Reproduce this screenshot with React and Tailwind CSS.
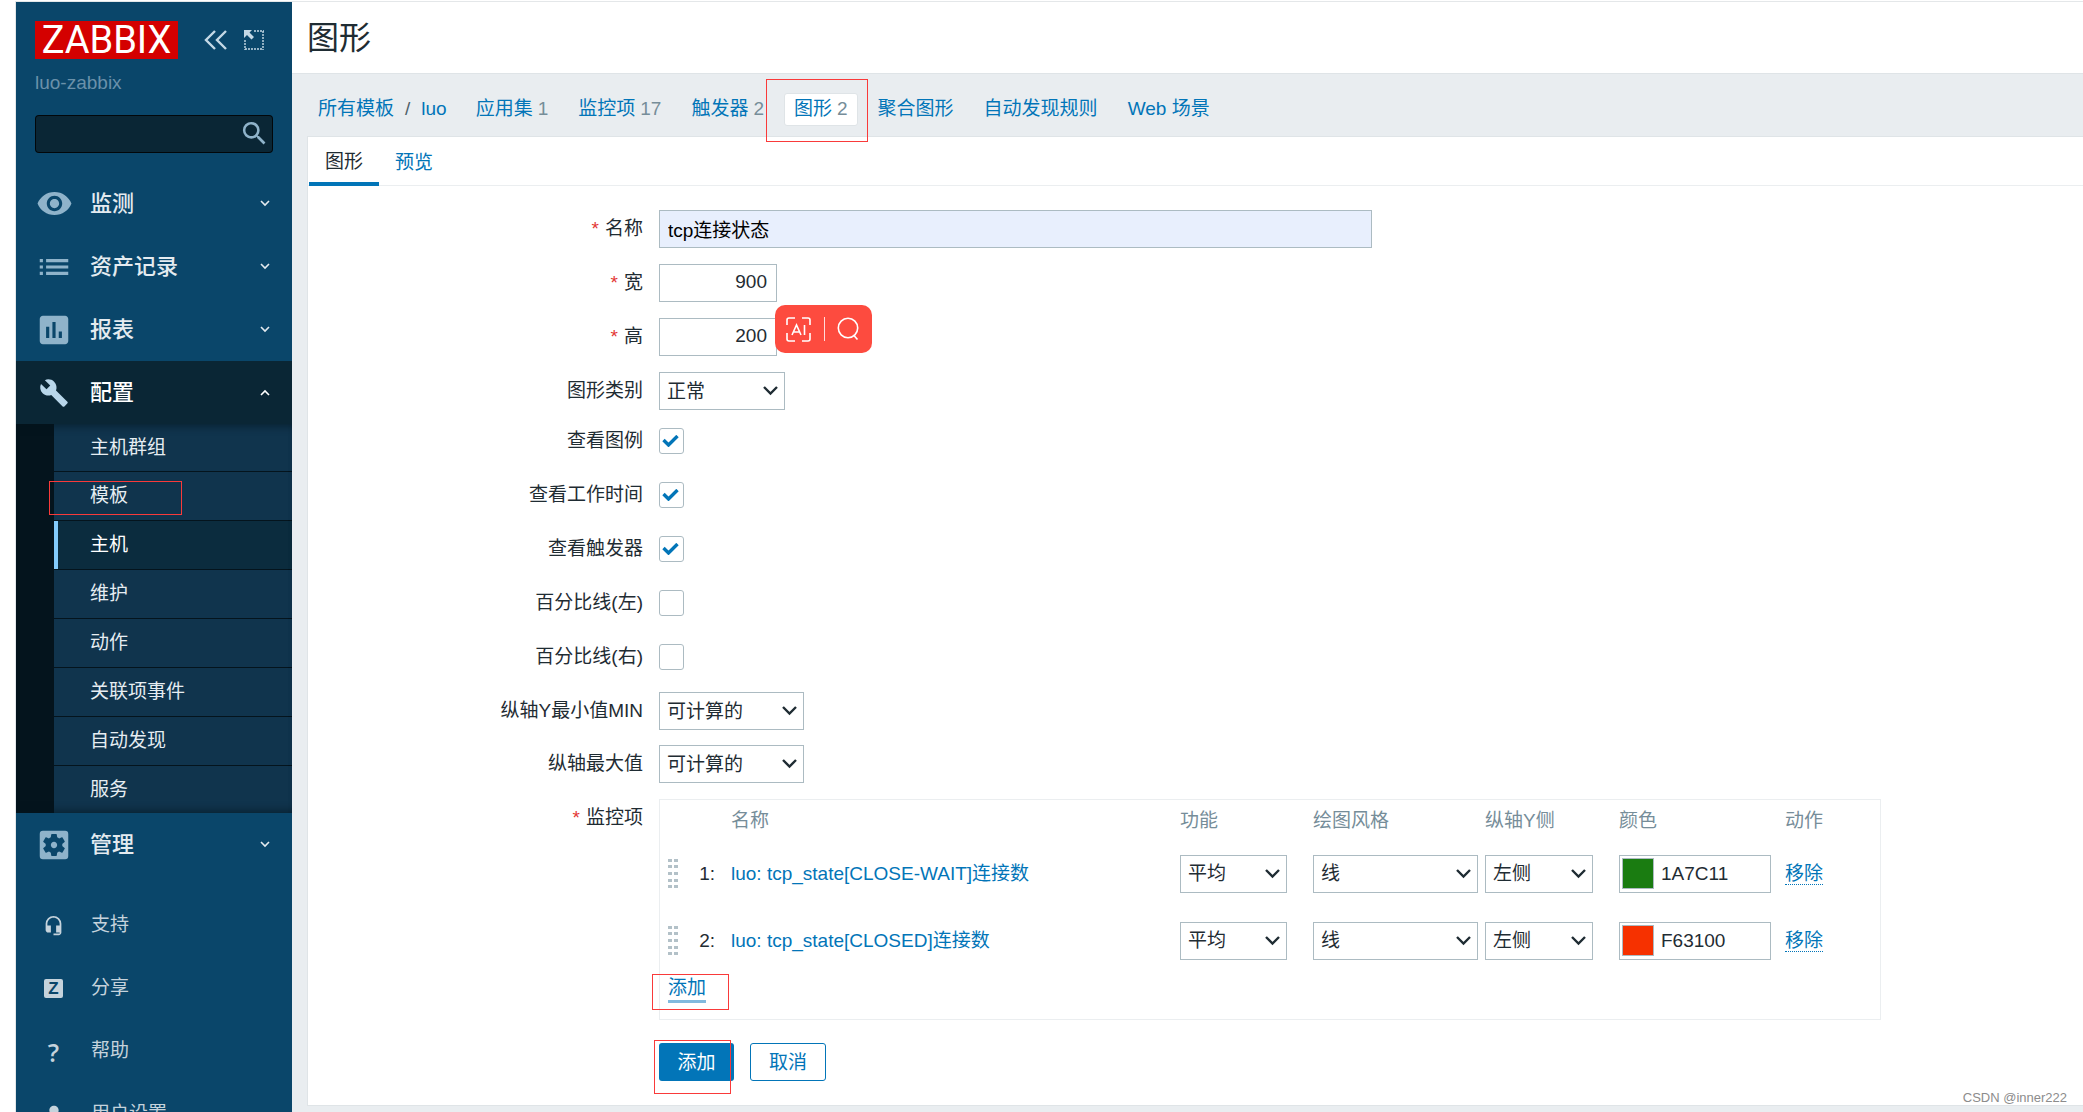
import React, { useState } from 'react'
import {
  MdVisibility,
  MdList,
  MdAssessment,
  MdBuild,
  MdSettingsApplications,
  MdSearch,
  MdHeadsetMic,
  MdPerson,
} from 'react-icons/md'

const subMenu = [
  '主机群组',
  '模板',
  '主机',
  '维护',
  '动作',
  '关联项事件',
  '自动发现',
  '服务',
]

const navLinks = [
  { name: '应用集', count: 1 },
  { name: '监控项', count: 17 },
  { name: '触发器', count: 2 },
  { name: '图形', count: 2, selected: true },
  { name: '聚合图形' },
  { name: '自动发现规则' },
  { name: 'Web 场景' },
]

const graphItems = [
  { id: 1, name: 'luo: tcp_state[CLOSE-WAIT]连接数', color: '1A7C11' },
  { id: 2, name: 'luo: tcp_state[CLOSED]连接数', color: 'F63100' },
]

// red frame drawn over an element
function Mark({ className }) {
  return (
    <span
      className={`pointer-events-none absolute border border-[#f93a3a] ${className}`}
    ></span>
  )
}

function Chevron({ up }) {
  return (
    <svg width="10" height="7" viewBox="0 0 10 7" fill="none" stroke="currentColor" strokeWidth="1.6">
      <path d={up ? 'M1 6l4-4 4 4' : 'M1 1l4 4 4-4'} />
    </svg>
  )
}

function MenuItem({ icon, name, open }) {
  return (
    <a
      href="#"
      className={`flex h-[63px] items-center pr-[22px] text-[22px] font-medium ${
        open ? 'bg-[#0a2635] text-white' : 'text-[#e4ebf0]'
      }`}
    >
      <span
        className={`flex w-[74px] items-center justify-center pl-[2px] ${
          open ? 'text-[#b8d6ea]' : 'text-[#8fb3ca]'
        }`}
      >
        {icon}
      </span>
      <span className="flex-1">{name}</span>
      <Chevron up={open} />
    </a>
  )
}

function FooterItem({ icon, name }) {
  return (
    <a href="#" className="flex h-[63px] items-center text-[#c5d3dc]">
      <span className="flex w-[75px] items-center justify-center">{icon}</span>
      <span>{name}</span>
    </a>
  )
}

function Sidebar() {
  return (
    <aside className="flex w-[276px] shrink-0 flex-col overflow-hidden bg-[#0a466a]">
      <div className="flex items-center pt-[19px] pl-[19px]">
        <a
          href="#"
          className="flex h-[38px] w-[143px] items-center justify-center bg-[#d40000] font-[Roboto] text-[38px] text-white"
        >
          ZABBIX
        </a>
        <button className="ml-[26px] text-[#c5d9e6]" aria-label="collapse">
          <svg width="24" height="20" viewBox="0 0 24 20" fill="none" stroke="currentColor" strokeWidth="2.4">
            <path d="M11 1L2 10l9 9M22 1l-9 9 9 9" />
          </svg>
        </button>
        <button className="ml-4 text-[#c5d9e6]" aria-label="hide">
          <svg width="20" height="20" viewBox="0 0 20 20" fill="none" stroke="currentColor" strokeWidth="1.4">
            <path d="M10 1h10M19 1v19M1 19h18M1 10v10" strokeDasharray="2 1" />
            <path d="M0 0h8L5.500 2.500l4.500 4.500-2.500 2.500L3 5 0 8z" fill="currentColor" stroke="none" />
          </svg>
        </button>
      </div>
      <div className="mt-3 pl-[19px] leading-6 text-[#6a91aa]">luo-zabbix</div>
      <div className="relative mx-[19px] mt-5 mb-[19px]">
        <input
          type="text"
          aria-label="search"
          className="block h-[38px] w-full rounded-[4px] border border-black/80 bg-[#0a2635] px-2 text-white"
        />
        <MdSearch size={31} className="absolute top-[3px] right-[3px] text-[#8fb3ca]" />
      </div>
      <nav>
        <MenuItem icon={<MdVisibility size={37} />} name="监测" />
        <MenuItem icon={<MdList size={38} />} name="资产记录" />
        <MenuItem icon={<MdAssessment size={38} />} name="报表" />
        <MenuItem icon={<MdBuild size={30} />} name="配置" open />
        <div className="relative bg-[#04141d] pl-[38px]">
          <ul className="flex flex-col gap-px">
            {subMenu.map((item) => (
              <li
                key={item}
                className={`relative h-12 first:h-[47px] last:h-[47px] ${
                  item === '主机'
                    ? 'border-l-4 border-[#83cbfb] bg-[#0b2c3e] pl-8 text-white'
                    : 'bg-[#10344d] pl-9 text-[#e6edf2]'
                }`}
              >
                <a href="#" className="block leading-[47px]">
                  {item}
                </a>
                {item === '模板' && (
                  <Mark className="top-[9px] -left-[5px] h-[34px] w-[133px]" />
                )}
              </li>
            ))}
          </ul>
          <div className="pointer-events-none absolute inset-0 shadow-[inset_0_8px_8px_-6px_rgba(4,20,29,0.6),inset_0_-8px_8px_-6px_rgba(4,20,29,0.6)]"></div>
        </div>
        <MenuItem icon={<MdSettingsApplications size={38} />} name="管理" />
      </nav>
      <nav className="mt-[18px]">
        <FooterItem icon={<MdHeadsetMic size={21} />} name="支持" />
        <FooterItem
          icon={
            <span className="flex size-[19px] items-center justify-center rounded-[2px] bg-[#c5d3dc] text-[17px] leading-none font-bold text-[#0a466a]">
              Z
            </span>
          }
          name="分享"
        />
        <FooterItem
          icon={<span className="font-['Open_Sans'] text-[25px] leading-6 font-semibold">?</span>}
          name="帮助"
        />
        <FooterItem icon={<MdPerson size={28} />} name="用户设置" />
      </nav>
    </aside>
  )
}

function Field({ id, label, required, children }) {
  return (
    <div className="flex items-center">
      <label htmlFor={id} className="mr-4 w-[335px] text-right leading-6">
        {required && <span className="mr-[6px] text-[#e33734]">*</span>}
        {label}
      </label>
      {children}
    </div>
  )
}

function Select({ id, value, label, className }) {
  return (
    <div className={`relative ${className}`}>
      <select
        id={id}
        aria-label={label}
        className="block h-[38px] w-full appearance-none border border-[#acbbc2] bg-white pt-[2px] pl-[7px] text-[#1f2c33]"
      >
        <option>{value}</option>
      </select>
      <svg
        className="pointer-events-none absolute top-[14px] right-[7px]"
        width="15"
        height="10"
        viewBox="0 0 15 10"
        fill="none"
        stroke="#1f2c33"
        strokeWidth="2.4"
      >
        <path d="M1 1l6.500 6.500L14 1" />
      </svg>
    </div>
  )
}

function Checkbox({ id, checked }) {
  const [on, setOn] = useState(!!checked)
  return (
    <div className="relative h-[26px] w-[25px]">
      <input
        id={id}
        type="checkbox"
        checked={on}
        onChange={() => setOn(!on)}
        className="block size-full appearance-none rounded-[3px] border border-[#acbbc2] bg-white"
      />
      {on && (
        <svg
          className="pointer-events-none absolute top-[7px] left-[3px]"
          width="17"
          height="12"
          viewBox="0 0 17 12"
          fill="none"
          stroke="#0275b8"
          strokeWidth="3.4"
        >
          <path d="M1.500 5l5 5L15.500 1" />
        </svg>
      )}
    </div>
  )
}

function AiBadge() {
  return (
    <div className="absolute -top-[13px] left-[116px] flex h-12 w-[97px] items-center justify-between rounded-[10px] bg-[#fd4b3f] pr-[13px] pl-[11px]">
      <svg width="25" height="25" viewBox="0 0 25 25" fill="none" stroke="#fff" strokeWidth="1.6">
        <path d="M1 8V3q0-2 2-2h6M16 1h6q2 0 2 2v5M24 16v6q0 2-2 2h-6M9 24H3q-2 0-2-2v-6" />
        <path d="M6 18l4.500-10L15 18M7.500 15h6M18.500 8v10" />
      </svg>
      <span className="h-6 w-px bg-white/80"></span>
      <svg width="22" height="24" viewBox="0 0 22 24" fill="none" stroke="#fff" strokeWidth="1.6">
        <circle cx="11" cy="11" r="9.700" />
        <path d="M16.500 18l4 4.500" />
      </svg>
    </div>
  )
}

function DragHandle() {
  return (
    <svg width="10" height="30" viewBox="0 0 10 30" fill="#b3c1c8">
      {[0, 6, 13, 20, 26].map((y) => (
        <g key={y}>
          <rect x="0" y={y} width="4" height="3" />
          <rect x="6" y={y} width="4" height="3" />
        </g>
      ))}
    </svg>
  )
}

function ItemsTable() {
  return (
    <div className="w-[1222px] border border-[#ebeef0] pb-4 pl-2">
      <table className="w-full table-fixed text-left">
        <colgroup>
          <col className="w-4" />
          <col className="w-[47px]" />
          <col />
          <col className="w-[133px]" />
          <col className="w-[172px]" />
          <col className="w-[134px]" />
          <col className="w-[166px]" />
          <col className="w-[95px]" />
        </colgroup>
        <thead>
          <tr className="h-10 text-[#768d99] *:pt-[2px] *:font-normal">
            <td></td>
            <td></td>
            <th>名称</th>
            <th>功能</th>
            <th>绘图风格</th>
            <th>纵轴Y侧</th>
            <th>颜色</th>
            <th>动作</th>
          </tr>
        </thead>
        <tbody>
          {graphItems.map((item) => (
            <tr key={item.id} className="h-[67px]">
              <td>
                <DragHandle />
              </td>
              <td className="pt-[2px] pr-4 text-right">{item.id}:</td>
              <td className="pt-[2px]">
                <a href="#" className="text-[#0275b8]">
                  {item.name}
                </a>
              </td>
              <td>
                <Select label="功能" value="平均" className="w-[107px]" />
              </td>
              <td>
                <Select label="绘图风格" value="线" className="w-[165px]" />
              </td>
              <td>
                <Select label="纵轴Y侧" value="左侧" className="w-[108px]" />
              </td>
              <td>
                <div className="flex h-[38px] w-[152px] items-center border border-[#acbbc2] pl-[2px]">
                  <span
                    className="h-[31px] w-8 shrink-0 border border-[#acbbc2]"
                    style={{ backgroundColor: '#' + item.color }}
                  ></span>
                  <input
                    type="text"
                    aria-label="颜色"
                    defaultValue={item.color}
                    className="h-full w-full min-w-0 pl-[7px]"
                  />
                </div>
              </td>
              <td className="pt-[2px]">
                <a href="#" className="border-b border-dotted border-[#0275b8] text-[#0275b8]">
                  移除
                </a>
              </td>
            </tr>
          ))}
        </tbody>
      </table>
      <div className="relative w-fit">
        <a href="#" className="block border-b-3 border-[#81bade] pt-[2px] leading-6 text-[#0275b8]">
          添加
        </a>
        <Mark className="top-0 -left-4 h-9 w-[77px]" />
      </div>
    </div>
  )
}

function GraphForm() {
  return (
    <form className="pt-6 pb-6">
      <div className="flex flex-col gap-4">
        <Field id="name" label="名称" required>
          <input
            id="name"
            type="text"
            defaultValue="tcp连接状态"
            className="h-[38px] w-[713px] border border-[#acbbc2] bg-[#e8effd] px-2 pb-[2px] text-black"
          />
        </Field>
        <Field id="width" label="宽" required>
          <input
            id="width"
            type="text"
            defaultValue="900"
            className="h-[38px] w-[118px] border border-[#acbbc2] px-[9px] pb-[2px] text-right"
          />
        </Field>
        <Field id="height" label="高" required>
          <div className="relative">
            <input
              id="height"
              type="text"
              defaultValue="200"
              className="block h-[38px] w-[118px] border border-[#acbbc2] px-[9px] pb-[2px] text-right"
            />
            <AiBadge />
          </div>
        </Field>
        <Field id="graphtype" label="图形类别">
          <Select id="graphtype" value="正常" className="w-[126px]" />
        </Field>
      </div>
      <div className="mt-[18px] flex flex-col gap-7">
        <Field id="legend" label="查看图例">
          <Checkbox id="legend" checked />
        </Field>
        <Field id="worktime" label="查看工作时间">
          <Checkbox id="worktime" checked />
        </Field>
        <Field id="triggers" label="查看触发器">
          <Checkbox id="triggers" checked />
        </Field>
        <Field id="percentleft" label="百分比线(左)">
          <Checkbox id="percentleft" />
        </Field>
        <Field id="percentright" label="百分比线(右)">
          <Checkbox id="percentright" />
        </Field>
      </div>
      <div className="mt-[22px] flex flex-col gap-[15px]">
        <Field id="ymin" label="纵轴Y最小值MIN">
          <Select id="ymin" value="可计算的" className="w-[145px]" />
        </Field>
        <Field id="ymax" label="纵轴最大值">
          <Select id="ymax" value="可计算的" className="w-[145px]" />
        </Field>
      </div>
      <div className="mt-4 flex items-start">
        <div className="mt-[7px] mr-4 w-[335px] text-right leading-6">
          <span className="mr-[6px] text-[#e33734]">*</span>
          监控项
        </div>
        <ItemsTable />
      </div>
      <div className="mt-[23px] flex gap-4 pl-[351px]">
        <div className="relative">
          <button
            type="button"
            className="block h-[38px] w-[75px] rounded-[3px] bg-[#0275b8] pt-[3px] text-white"
          >
            添加
          </button>
          <Mark className="-top-[3px] -left-[5px] h-[54px] w-[77px]" />
        </div>
        <button
          type="button"
          className="h-[38px] w-[76px] rounded-[3px] border border-[#0275b8] pt-[3px] text-[#0275b8]"
        >
          取消
        </button>
      </div>
    </form>
  )
}

export default function App() {
  return (
    <div className="relative h-screen overflow-hidden bg-white pt-px pl-[15px] font-['Liberation_Sans','Noto_Sans_CJK_SC',sans-serif] text-[19px] text-[#1f2c33]">
      <div className="flex h-full border-t border-l border-[#e4e7e9]">
        <Sidebar />
        <main className="min-w-0 flex-1 bg-[#e9edf0]">
          <header className="flex h-[72px] items-center border-b border-[#dfe4e7] bg-white pl-[15px]">
            <h1 className="text-[32px]">图形</h1>
          </header>
          <nav className="flex h-[62px] items-center gap-[10px] pt-2 pl-[26px] text-[#0275b8]">
            <div className="mr-[9px] flex items-center">
              <a href="#">所有模板</a>
              <span className="mx-[11px] text-[#4f5f68]">/</span>
              <a href="#">luo</a>
            </div>
            {navLinks.map((link) => (
              <div key={link.name} className="relative">
                <a
                  href="#"
                  className={`flex h-[33px] items-center gap-[5px] rounded-[3px] border px-[9px] ${
                    link.selected ? 'border-[#dfe4e7] bg-white' : 'border-transparent'
                  }`}
                >
                  {link.name}
                  {link.count && <span className="text-[#768d99]">{link.count}</span>}
                </a>
                {link.selected && <Mark className="-top-[14px] -right-[10px] -bottom-4 -left-[18px]" />}
              </div>
            ))}
          </nav>
          <section className="ml-[15px] border-y border-l border-[#dfe4e7] bg-white">
            <div className="flex border-b border-[#ebeef0] pl-px" role="tablist">
              <button
                role="tab"
                className="-mb-px h-[49px] border-b-4 border-[#0275b8] px-4 pt-[6px]"
              >
                图形
              </button>
              <button role="tab" className="h-12 px-4 pt-1 text-[#0275b8]">
                预览
              </button>
            </div>
            <GraphForm />
          </section>
        </main>
      </div>
      <div className="absolute right-4 bottom-1 text-[13px] leading-5 text-[#8c8c8c]">
        CSDN @inner222
      </div>
    </div>
  )
}
